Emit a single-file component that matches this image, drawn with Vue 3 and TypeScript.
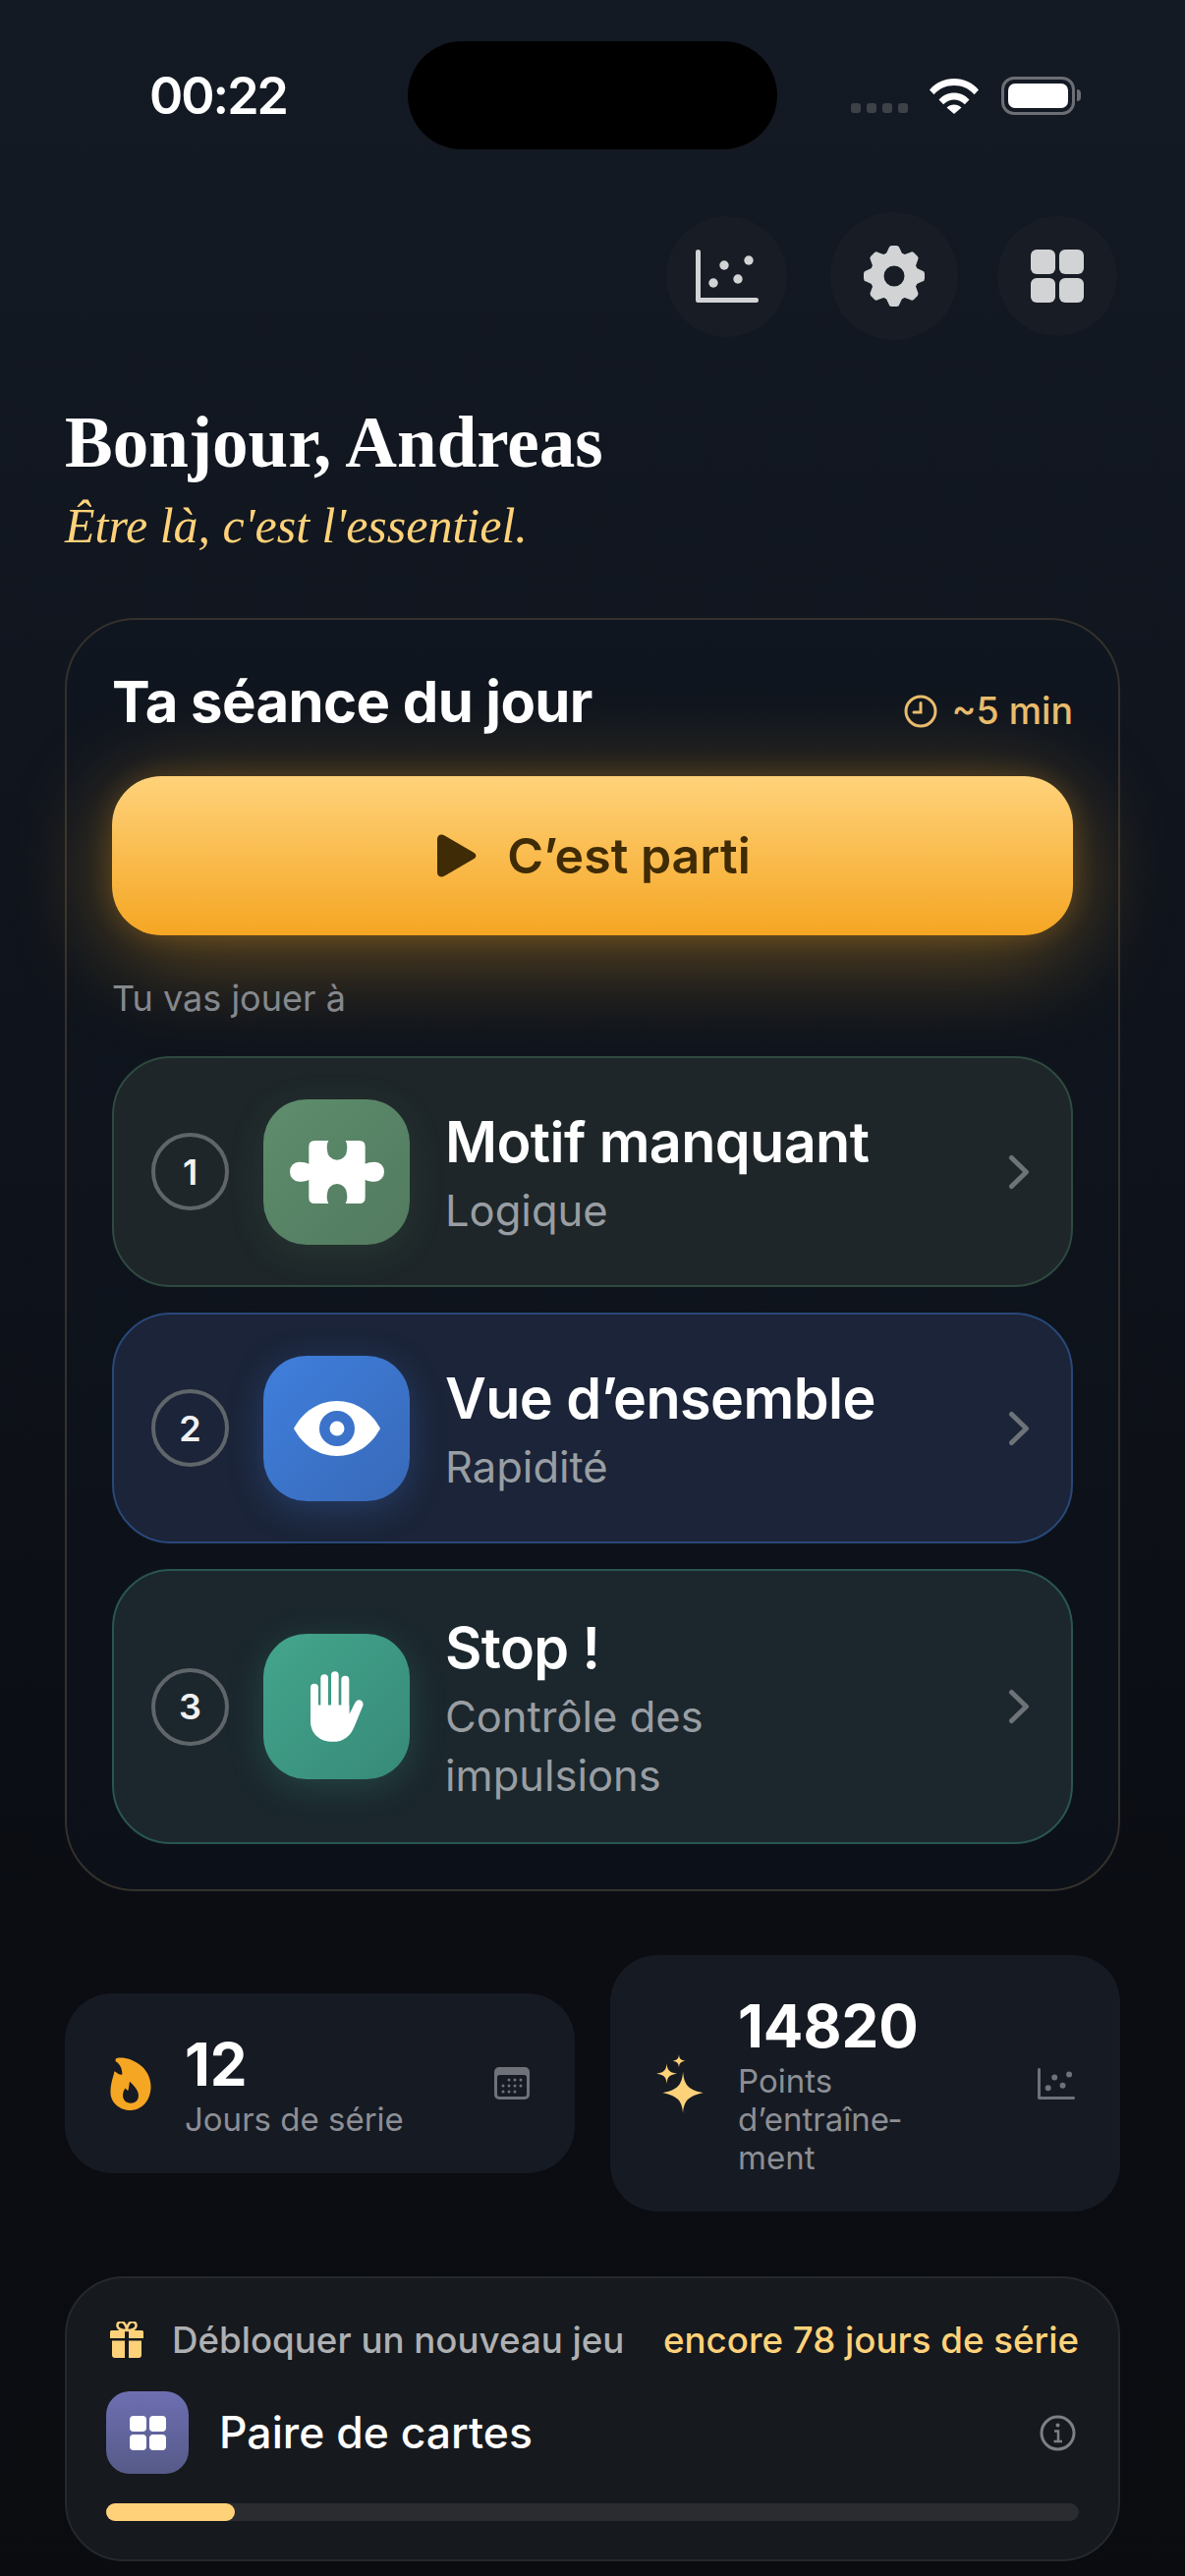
<script setup lang="ts">
type Game = {
  id: number
  title: string
  sub: string
  icon: 'puzzle' | 'eye' | 'hand'
  tone: string
}

const games: Game[] = [
  { id: 1, title: 'Motif manquant', sub: 'Logique', icon: 'puzzle', tone: 'green' },
  { id: 2, title: 'Vue d’ensemble', sub: 'Rapidité', icon: 'eye', tone: 'blue' },
  { id: 3, title: 'Stop !', sub: 'Contrôle des impulsions', icon: 'hand', tone: 'teal' },
]

const gearTeeth = [0, 45, 90, 135, 180, 225, 270, 315]
const calendarDots = [
  [15, 5], [21, 5], [27, 5],
  [9, 11], [15, 11], [21, 11], [27, 11],
  [9, 17], [15, 17], [21, 17],
]
const progress = 13.2
</script>

<template>
  <div class="screen">
    <div class="status">
      <span class="time">00:22</span>
      <div class="island"></div>
      <div class="status-right">
        <div class="signal"><i></i><i></i><i></i><i></i></div>
        <svg class="wifi" width="50" height="37" viewBox="0 0 50 37">
          <path d="M0 12.5C6.5 5 15 1 25 1s18.500 4 25 11.500l-4.500 4.700C40 11 33 8 25 8S10 11 4.500 17.200z" fill="#fff" />
          <path d="M9.500 22.500C13.500 18 19 15.500 25 15.500s11.500 2.500 15.500 7l-4.700 4.800C32.800 24.200 29 22.500 25 22.500s-7.800 1.700-10.800 4.800z" fill="#fff" />
          <path d="M17.500 30.500c2-2 4.700-3 7.500-3s5.500 1 7.500 3L25 37z" fill="#fff" />
        </svg>
        <div class="battery">
          <div class="battery-body"><div class="battery-fill"></div></div>
          <div class="battery-nub"></div>
        </div>
      </div>
    </div>

    <main class="content">
      <div class="top-actions">
        <button class="round round-chart" aria-label="Statistiques">
          <svg width="64" height="54" viewBox="0 0 64 54" fill="#d2d3d5">
            <path d="M2.500 2.500V51.500H61.500" fill="none" stroke="#d2d3d5" stroke-width="5" stroke-linecap="round" stroke-linejoin="round" />
            <circle cx="18" cy="34" r="4.700" />
            <circle cx="29" cy="16" r="4.700" />
            <circle cx="43" cy="30" r="4.700" />
            <circle cx="54" cy="11" r="4.700" />
          </svg>
        </button>
        <button class="round round-gear" aria-label="Réglages">
          <svg width="62" height="62" viewBox="-31 -31 62 62" fill="#d2d3d5">
            <circle r="17.500" fill="none" stroke="#d2d3d5" stroke-width="14" />
            <path
              v-for="deg in gearTeeth"
              :key="deg"
              :transform="`rotate(${deg})`"
              d="M-9 -21L-5.500 -28.500Q-5 -31 -2.500 -31H2.500Q5 -31 5.500 -28.500L9 -21z"
            />
          </svg>
        </button>
        <button class="round round-grid" aria-label="Jeux">
          <div class="grid-icon">
            <i></i><i></i><i></i><i></i>
          </div>
        </button>
      </div>

      <h1 class="hello">Bonjour, Andreas</h1>
      <p class="motto">Être là, c'est l'essentiel.</p>

      <section class="session">
        <header class="session-head">
          <h2>Ta séance du jour</h2>
          <span class="duration">
            <svg width="34" height="34" viewBox="0 0 34 34" fill="none" stroke="#e9bc6c" stroke-width="3" stroke-linecap="round">
              <circle cx="17" cy="17" r="15" />
              <path d="M17 8.500V18H10" />
            </svg>
            ~5 min
          </span>
        </header>

        <button class="start">
          <svg width="40" height="44" viewBox="0 0 40 44">
            <path d="M0 5C0 1 4 -1 7.500 1.500L37.500 19C40 20.500 40 23.500 37.500 25L7.500 42.500C4 45 0 43 0 39z" fill="#3f2b05" />
          </svg>
          C’est parti
        </button>

        <p class="next-label">Tu vas jouer à</p>

        <div class="game-list">
          <div v-for="game in games" :key="game.id" class="game" :class="`game--${game.tone}`">
            <span class="num">{{ game.id }}</span>
            <div class="game-icon">
              <svg v-if="game.icon === 'puzzle'" width="96" height="64" viewBox="132 183 288 192">
                <path
                  d="M208 183H250Q243 195 246 212A30 30 0 0 0 306 212Q309 195 302 183H344Q362 183 362 201V254Q372 248 392 248A28 30 0 0 1 392 308Q372 308 362 302V357Q362 375 344 375H302Q309 362 306 345A30 30 0 0 0 246 345Q243 362 250 375H208Q190 375 190 357V302Q180 308 160 308A28 30 0 0 1 160 248Q180 248 190 254V201Q190 183 208 183z"
                  fill="#fff"
                />
              </svg>
              <svg v-else-if="game.icon === 'eye'" width="88" height="56" viewBox="0 0 88 56">
                <path d="M0 28C9 11 25 0 44 0s35 11 44 28C79 45 63 56 44 56S9 45 0 28z" fill="#fff" />
                <circle cx="44" cy="28" r="18" fill="#3a73c9" />
                <circle cx="44" cy="28" r="7.500" fill="#fff" />
              </svg>
              <svg v-else width="54" height="72" viewBox="198 187 162 215" fill="#fff">
                <rect x="198" y="225" width="24" height="110" rx="12" />
                <rect x="229" y="196" width="23" height="130" rx="11.500" />
                <rect x="261" y="187" width="23" height="140" rx="11.500" />
                <rect x="292" y="201" width="24" height="130" rx="12" />
                <path d="M198 290V340C198 378 228 402 265 402C300 402 320 385 332 355L358 292C362 280 350 270 340 276C332 282 325 305 316 318V290z" />
              </svg>
            </div>
            <div class="game-text">
              <div class="game-title">{{ game.title }}</div>
              <div class="game-sub">{{ game.sub }}</div>
            </div>
            <svg class="chevron" width="22" height="36" viewBox="0 0 22 36" fill="none" stroke="#6e7378" stroke-width="5" stroke-linecap="round" stroke-linejoin="round">
              <path d="M3.500 3.500L18.500 18L3.500 32.500" />
            </svg>
          </div>
        </div>
      </section>

      <section class="stats">
        <div class="stat">
          <svg width="42" height="54" viewBox="96 105 124 163">
            <path
              fill="#f5a623"
              fill-rule="evenodd"
              d="M115 108C150 100 220 130 220 195C220 240 190 268 158 268C125 268 96 245 96 212C96 185 105 165 108 148C118 155 125 160 132 158C132 140 125 125 112 118Q110 108 115 108zM155 180C170 195 182 208 182 222C182 238 172 246 158 246C144 246 134 236 134 222C134 212 138 205 142 200C145 205 148 207 150 207C153 198 153 190 155 180z"
            />
          </svg>
          <div class="stat-text">
            <div class="stat-value">12</div>
            <div class="stat-label">Jours de série</div>
          </div>
          <svg class="stat-end" width="36" height="33" viewBox="0 0 36 33">
            <rect width="36" height="33" rx="5" fill="#6f7278" />
            <rect x="3" y="8" width="30" height="22" rx="2.500" fill="#161a23" />
            <g transform="translate(0 8)" fill="#6f7278">
              <circle v-for="([cx, cy], i) in calendarDots" :key="i" :cx="cx" :cy="cy" r="1.500" />
            </g>
          </svg>
        </div>

        <div class="stat">
          <svg width="50" height="60" viewBox="0 0 46 58" fill="#ffd27a">
            <path d="M26 17C27 30 31 35 46 38C31 41 27 46 26 58C25 46 21 41 6 38C21 35 25 30 26 17z" />
            <path d="M10 9C10.500 15 12 18 20 19C12 20 10.500 23 10 29C9.500 23 8 20 0 19C8 18 9.500 15 10 9z" />
            <path d="M22 0C22.400 4 23.200 5.600 28 6.500C23.200 7.400 22.400 9 22 13C21.600 9 20.800 7.400 16 6.500C20.800 5.600 21.600 4 22 0z" />
          </svg>
          <div class="stat-text stat-text--narrow">
            <div class="stat-value">14820</div>
            <div class="stat-label">Points d’entraîne&shy;ment</div>
          </div>
          <svg class="stat-end" width="38" height="34" viewBox="0 0 64 54" fill="#6f7278">
            <path d="M2.500 2.500V51.500H61.500" fill="none" stroke="#6f7278" stroke-width="5" stroke-linecap="round" stroke-linejoin="round" />
            <circle cx="18" cy="34" r="5" />
            <circle cx="29" cy="16" r="5" />
            <circle cx="43" cy="30" r="5" />
            <circle cx="54" cy="11" r="5" />
          </svg>
        </div>
      </section>

      <section class="unlock">
        <div class="unlock-head">
          <svg width="34" height="37" viewBox="0 0 34 37">
            <path d="M17 9C13 9 8 8.500 7.500 4.500C7 0 12.500 -1 15 2.500C16 4 17 6 17 9C17 6 18 4 19 2.500C21.500 -1 27 0 26.500 4.500C26 8.500 21 9 17 9z" fill="none" stroke="#ffd27a" stroke-width="2.500" />
            <path d="M1.500 9H15V17H0V10.500Q0 9 1.500 9zM19 9H32.500Q34 9 34 10.500V17H19zM2 19.500H15V37H5Q2 37 2 34zM19 19.500H32V34Q32 37 29 37H19z" fill="#ffd27a" />
          </svg>
          <span class="unlock-title">Débloquer un nouveau jeu</span>
          <span class="unlock-left">encore 78 jours de série</span>
        </div>
        <div class="unlock-game">
          <div class="unlock-icon">
            <div class="grid-icon grid-icon--small">
              <i></i><i></i><i></i><i></i>
            </div>
          </div>
          <span class="unlock-name">Paire de cartes</span>
          <svg class="info" width="37" height="37" viewBox="0 0 37 37" fill="none" stroke="#7d8084" stroke-width="3">
            <circle cx="18.500" cy="18.500" r="16.500" />
            <path d="M15 16.500H19V27M14.500 27H23" stroke-width="2.500" />
            <circle cx="18.500" cy="10.500" r="2" fill="#7d8084" stroke="none" />
          </svg>
        </div>
        <div class="track">
          <div class="fill" :style="{ width: progress + '%' }"></div>
        </div>
      </section>
    </main>
  </div>
</template>

<style>
html,
body {
  margin: 0;
  background: #0a0c11;
}
</style>

<style scoped>
.screen {
  width: 1206px;
  height: 2622px;
  overflow: hidden;
  background: linear-gradient(180deg, #141a24 0%, #10151e 30%, #0b0d13 75%, #0a0c10 100%);
  font-family: Inter, "Noto Sans", sans-serif;
  color: #fff;
}

.status {
  display: flex;
  align-items: center;
  height: 110px;
  padding: 42px 106px 0 152px;
}

.time {
  width: 263px;
  font-size: 52px;
  font-weight: 600;
  letter-spacing: -2px;
}

.island {
  width: 376px;
  height: 110px;
  border-radius: 55px;
  background: #000;
}

.status-right {
  flex: 1;
  display: flex;
  justify-content: flex-end;
  align-items: center;
}

.signal {
  display: flex;
  gap: 6px;
  margin: 26px 22px 0 0;
}

.signal i {
  width: 10px;
  height: 10px;
  border-radius: 3px;
  background: #3d4148;
}

.wifi {
  margin: 0 23px 0 0;
}

.battery {
  display: flex;
  align-items: center;
  gap: 2px;
}

.battery-body {
  box-sizing: border-box;
  width: 75px;
  height: 39px;
  padding: 4px;
  border: 3px solid #6b6e73;
  border-radius: 13px;
}

.battery-fill {
  width: 100%;
  height: 100%;
  border-radius: 7px;
  background: #fff;
}

.battery-nub {
  width: 4px;
  height: 12px;
  border-radius: 0 4px 4px 0;
  background: #6b6e73;
}

.content {
  padding: 0 66px;
}

.top-actions {
  display: flex;
  justify-content: flex-end;
  align-items: center;
  height: 130px;
  margin: 64px 3px 0 0;
}

.round {
  display: flex;
  align-items: center;
  justify-content: center;
  padding: 0;
  border: none;
  border-radius: 50%;
  background: #171c25;
}

.round-chart {
  width: 123px;
  height: 123px;
}

.round-gear {
  width: 130px;
  height: 130px;
  margin: 0 40px 0 44px;
}

.round-grid {
  width: 122px;
  height: 122px;
}

.grid-icon {
  display: grid;
  grid-template-columns: 25px 25px;
  grid-auto-rows: 25px;
  gap: 4px;
}

.grid-icon i {
  border-radius: 6px;
  background: #d2d3d5;
}

.grid-icon--small {
  grid-template-columns: 17px 17px;
  grid-auto-rows: 16px;
  gap: 3px;
}

.grid-icon--small i {
  border-radius: 4px;
  background: #fff;
}

.hello {
  margin: 65px 0 0;
  font-family: "Liberation Serif", serif;
  font-size: 73px;
  font-weight: 700;
  line-height: 80px;
}

.motto {
  margin: 16px 0 0;
  font-family: "Liberation Serif", serif;
  font-size: 50px;
  font-style: italic;
  line-height: 56px;
  color: #ffd27a;
}

.session {
  box-sizing: border-box;
  margin-top: 66px;
  padding: 45px 46px 46px;
  border: 2px solid #34312c;
  border-radius: 72px;
  background: rgba(16, 22, 32, 0.4);
}

.session-head {
  display: flex;
  justify-content: space-between;
  align-items: flex-end;
}

.session-head h2 {
  margin: 0;
  font-size: 58px;
  font-weight: 700;
  line-height: 76px;
  letter-spacing: -0.6px;
}

.duration {
  display: flex;
  align-items: center;
  gap: 14px;
  margin-bottom: 6px;
  font-size: 37.500px;
  font-weight: 500;
  color: #e9bc6c;
}

.start {
  display: flex;
  align-items: center;
  justify-content: center;
  gap: 31px;
  width: 100%;
  height: 162px;
  margin-top: 38px;
  padding: 0 0 0 3px;
  border: none;
  border-radius: 50px;
  background: linear-gradient(180deg, #ffd27a 0%, #f5a623 100%);
  box-shadow: 0 18px 100px rgba(245, 166, 35, 0.42), 0 0 28px rgba(245, 166, 35, 0.2);
  font-family: inherit;
  font-size: 50px;
  font-weight: 600;
  color: #3f2b05;
}

.next-label {
  margin: 42px 0 0;
  font-size: 36px;
  line-height: 44px;
  color: #85888d;
}

.game-list {
  display: flex;
  flex-direction: column;
  gap: 26px;
  margin-top: 37px;
}

.game {
  display: flex;
  align-items: center;
  padding: 41.5px 42px 41.5px 38px;
  border: 2px solid;
  border-radius: 60px;
}

.game--green {
  background: #1e2629;
  border-color: #2e4a3f;
}

.game--blue {
  background: #1b2438;
  border-color: #284878;
}

.game--teal {
  background: #1b272d;
  border-color: #29564f;
}

.num {
  box-sizing: border-box;
  flex: none;
  display: flex;
  align-items: center;
  justify-content: center;
  width: 79px;
  height: 79px;
  border: 4px solid #60656a;
  border-radius: 50%;
  font-size: 36px;
  font-weight: 600;
  color: #f0f1f2;
}

.game-icon {
  flex: none;
  display: flex;
  align-items: center;
  justify-content: center;
  width: 149px;
  height: 148px;
  margin: 0 36px 0 35px;
  border-radius: 44px;
}

.game--green .game-icon {
  background: linear-gradient(135deg, #5e8d6c, #527a60);
  box-shadow: 0 8px 36px rgba(94, 141, 108, 0.16);
}

.game--blue .game-icon {
  background: linear-gradient(135deg, #3f7fdd, #3869b8);
  box-shadow: 0 8px 36px rgba(63, 127, 221, 0.28);
}

.game--teal .game-icon {
  background: linear-gradient(135deg, #43a58c, #378a78);
  box-shadow: 0 8px 36px rgba(67, 165, 140, 0.24);
}

.game-text {
  flex: 1;
  max-width: 470px;
}

.game-title {
  font-size: 57.500px;
  font-weight: 600;
  line-height: 73px;
  letter-spacing: -0.6px;
}

.game-sub {
  margin-top: 3px;
  margin-bottom: -3px;
  font-size: 43.500px;
  line-height: 60px;
  color: #999ea3;
}

.chevron {
  flex: none;
  margin-left: auto;
}

.stats {
  display: grid;
  grid-template-columns: 1fr 1fr;
  gap: 36px;
  align-items: center;
  margin-top: 65px;
}

.stat {
  display: flex;
  align-items: center;
  padding: 38px 46px;
  border-radius: 48px;
  background: #161a23;
}

.stat-text {
  flex: 1;
  margin-left: 34px;
}

.stat-text--narrow {
  max-width: 210px;
  margin-left: 34px;
}

.stat-value {
  font-size: 60px;
  font-weight: 700;
  line-height: 68px;
}

.stat-label {
  margin-top: 3px;
  margin-bottom: -3px;
  font-size: 33px;
  line-height: 39px;
  color: #8c8f95;
}

.stat-end {
  flex: none;
  margin-left: auto;
}

.unlock {
  box-sizing: border-box;
  height: 290px;
  margin-top: 66px;
  padding: 40px;
  border: 2px solid #25282c;
  border-radius: 60px;
  background: #16191d;
}

.unlock-head {
  display: flex;
  align-items: center;
  gap: 29px;
}

.unlock-head svg {
  flex: none;
  margin-left: 4px;
}

.unlock-title {
  font-size: 36.700px;
  font-weight: 500;
  color: #aeb0b3;
}

.unlock-left {
  margin-left: auto;
  font-size: 36.700px;
  font-weight: 500;
  color: #ffd27a;
}

.unlock-game {
  display: flex;
  align-items: center;
  margin-top: 30px;
}

.unlock-icon {
  flex: none;
  display: flex;
  align-items: center;
  justify-content: center;
  width: 84px;
  height: 84px;
  border-radius: 24px;
  background: linear-gradient(180deg, #6d6fb2, #565a88);
}

.unlock-name {
  flex: 1;
  margin-left: 31px;
  font-size: 44.500px;
  font-weight: 500;
}

.info {
  margin-right: 3px;
}

.track {
  height: 18px;
  margin-top: 30px;
  border-radius: 9px;
  background: #2a2c30;
}

.fill {
  height: 100%;
  border-radius: 9px;
  background: #ffd27a;
}
</style>
